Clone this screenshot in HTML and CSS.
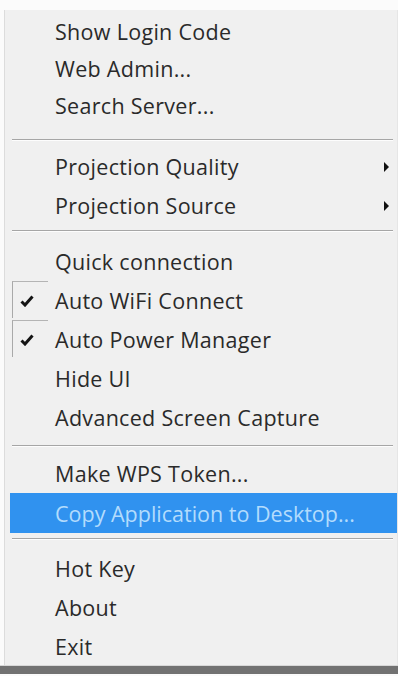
FILE: index.html
```html
<!DOCTYPE html>
<html lang="en">
<head>
    <meta charset="UTF-8">
    <meta name="viewport" content="width=device-width, initial-scale=1.0">
    <title>Tray Menu</title>
    <link rel="stylesheet" href="styles.css">
</head>
<body>
    <div class="menu">
        <div class="group group-first">
            <div class="menu-item short"><span class="label">Show Login Code</span></div>
            <div class="menu-item short"><span class="label">Web Admin...</span></div>
            <div class="menu-item short"><span class="label">Search Server...</span></div>
        </div>
        <div class="separator sep-first"></div>

        <div class="group">
            <div class="menu-item"><span class="label">Projection Quality</span><span class="arrow"></span></div>
            <div class="menu-item"><span class="label">Projection Source</span><span class="arrow"></span></div>
        </div>
        <div class="separator"></div>

        <div class="group">
            <div class="menu-item"><span class="label">Quick connection</span></div>
            <div class="menu-item checked">
                <span class="check-box">
                    <svg width="14" height="12" viewBox="0 0 14 12"><path d="M1.5 6.5 L5 10 L12.5 1.5" fill="none" stroke="#141414" stroke-width="3" stroke-linejoin="miter"/></svg>
                </span>
                <span class="label">Auto WiFi Connect</span>
            </div>
            <div class="menu-item checked">
                <span class="check-box">
                    <svg width="14" height="12" viewBox="0 0 14 12"><path d="M1.5 6.5 L5 10 L12.5 1.5" fill="none" stroke="#141414" stroke-width="3" stroke-linejoin="miter"/></svg>
                </span>
                <span class="label">Auto Power Manager</span>
            </div>
            <div class="menu-item"><span class="label">Hide UI</span></div>
            <div class="menu-item"><span class="label">Advanced Screen Capture</span></div>
        </div>
        <div class="separator sep-wide"></div>

        <div class="group">
            <div class="menu-item"><span class="label">Make WPS Token...</span></div>
            <div class="menu-item active"><span class="label">Copy Application to Desktop...</span></div>
        </div>
        <div class="separator sep-last"></div>

        <div class="group">
            <div class="menu-item"><span class="label">Hot Key</span></div>
            <div class="menu-item"><span class="label">About</span></div>
            <div class="menu-item"><span class="label">Exit</span></div>
        </div>
    </div>
    <div class="taskbar"></div>
</body>
</html>
```
FILE: styles.css
```css
/* Page */
body {
    margin: 0;
    background-color: #fbfbfb;
    font-family: "Open Sans", "Noto Sans", Arial, sans-serif;
    overflow: hidden;
}

/* Context menu panel */
.menu {
    margin: 10px 0 0 4px;
    padding-top: 3px;
    height: 655px;
    box-sizing: border-box;
    background-color: #f0f0f0;
    border-left: 1px solid #dcdcdc;
    border-right: 1px solid #e6e6e6;
}

.group {
    display: flex;
    flex-direction: column;
}

/* Menu rows */
.menu-item {
    position: relative;
    display: flex;
    align-items: center;
    height: 39px;
    padding-left: 45px;
    margin-left: 5px;
    font-size: 21.5px;
    color: #2a2a2a;
    letter-spacing: 0.3px;
}

.menu-item.short {
    height: 37px;
}

.menu-item.active {
    height: 40px;
    background-color: #3092ef;
    color: #b3dcfd;
    letter-spacing: 0;
}

.label {
    white-space: nowrap;
}

/* Submenu arrow */
.arrow {
    margin-left: auto;
    margin-right: 8px;
    width: 0;
    height: 0;
    border-top: 5px solid transparent;
    border-bottom: 5px solid transparent;
    border-left: 5px solid #111;
}

/* Check mark frame */
.check-box {
    position: absolute;
    left: 2px;
    top: 0;
    width: 36px;
    height: 37px;
    display: flex;
    align-items: center;
    justify-content: center;
    border-left: 1px solid #a9a9a9;
    border-top: 1px solid #b4b4b4;
    box-sizing: border-box;
}

.check-box svg {
    margin-left: -7px;
    margin-top: 2px;
}

/* Separators */
.separator {
    height: 1px;
    margin: 5px 4px 10px 7px;
    background-color: #a6a6a6;
    border-bottom: 1px solid #fdfdfd;
}

.sep-first {
    margin-top: 15px;
    margin-bottom: 6px;
}

.sep-wide {
    margin-top: 8px;
    margin-bottom: 7px;
}

.sep-last {
    margin-top: 5px;
    margin-bottom: 9px;
}

/* Taskbar strip at the bottom */
.taskbar {
    height: 8px;
    border-top: 1px solid #d8d8d8;
    background-color: #727272;
}
```
